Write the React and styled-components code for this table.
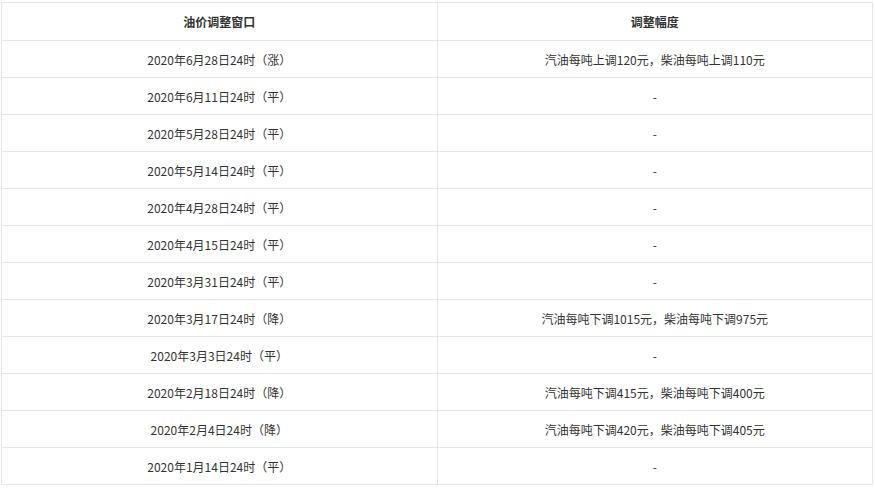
import React from "react";
import styled, { createGlobalStyle } from "styled-components";

const rows = [
  ["2020年6月28日24时（涨）", "汽油每吨上调120元，柴油每吨上调110元"],
  ["2020年6月11日24时（平）", "-"],
  ["2020年5月28日24时（平）", "-"],
  ["2020年5月14日24时（平）", "-"],
  ["2020年4月28日24时（平）", "-"],
  ["2020年4月15日24时（平）", "-"],
  ["2020年3月31日24时（平）", "-"],
  ["2020年3月17日24时（降）", "汽油每吨下调1015元，柴油每吨下调975元"],
  ["2020年3月3日24时（平）", "-"],
  ["2020年2月18日24时（降）", "汽油每吨下调415元，柴油每吨下调400元"],
  ["2020年2月4日24时（降）", "汽油每吨下调420元，柴油每吨下调405元"],
  ["2020年1月14日24时（平）", "-"],
];

const GlobalStyle = createGlobalStyle`
  body {
    margin: 0;
    background: #fff;
    font-family: "Microsoft YaHei", "Noto Sans CJK SC", "Noto Sans", sans-serif;
  }
`;

const Wrapper = styled.div`
  padding: 2px 0 0 1px;
`;

const Table = styled.table`
  width: 872px;
  border-collapse: collapse;
  table-layout: fixed;
  color: #333;
  font-size: 12px;
`;

const Head = styled.th`
  height: 37px;
  padding: 0;
  border: 1px solid #e6e6ea;
  font-weight: bold;
  text-align: center;
`;

const Cell = styled.td`
  height: 36px;
  padding: 0;
  border: 1px solid #e6e6ea;
  text-align: center;
`;

export default function App() {
  return (
    <Wrapper>
      <GlobalStyle />
      <Table>
        <thead>
          <tr>
            <Head>油价调整窗口</Head>
            <Head>调整幅度</Head>
          </tr>
        </thead>
        <tbody>
          {rows.map(([date, change]) => (
            <tr key={date}>
              <Cell>{date}</Cell>
              <Cell>{change}</Cell>
            </tr>
          ))}
        </tbody>
      </Table>
    </Wrapper>
  );
}
